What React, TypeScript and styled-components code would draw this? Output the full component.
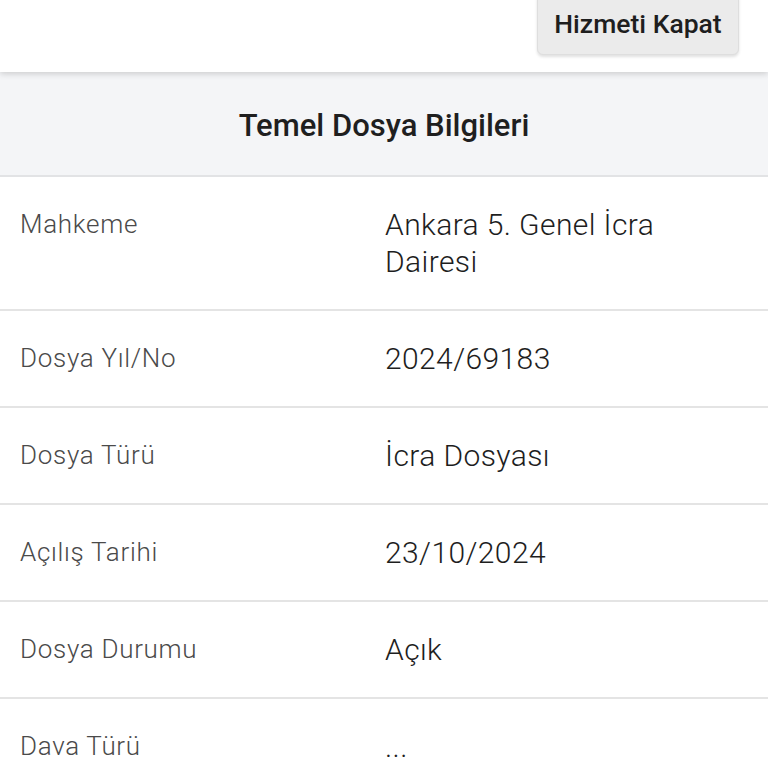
import React from 'react'
import styled, { createGlobalStyle } from 'styled-components'

const GlobalStyle = createGlobalStyle`
    html, body {
        margin: 0;
        padding: 0;
        background: #ffffff;
        font-family: Roboto, "Noto Sans", "Liberation Sans", sans-serif;
    }
    * {
        box-sizing: border-box;
    }
`

const Page = styled.div`
    display: flex;
    flex-direction: column;
    width: 100%;
    min-height: 100vh;
    overflow: hidden;
`

const TopBar = styled.div`
    position: relative;
    z-index: 1;
    display: flex;
    justify-content: flex-end;
    align-items: flex-start;
    height: 72px;
    padding-right: 29px;
    background: #ffffff;
    box-shadow: 0 2px 6px rgba(0, 0, 0, 0.16);
`

const CloseButton = styled.button`
    display: flex;
    align-items: center;
    justify-content: center;
    width: 202px;
    height: 64px;
    margin-top: -9px;
    padding: 0;
    border: 1px solid #dedede;
    border-radius: 6px;
    background: #ebebeb;
    box-shadow: 0 2px 3px rgba(0, 0, 0, 0.12);
    font-family: inherit;
    font-size: 26.5px;
    font-weight: 500;
    color: #1e1e1e;
`

const SectionHeader = styled.div`
    display: flex;
    align-items: center;
    justify-content: center;
    height: 105px;
    padding-top: 3px;
    background: #f4f5f7;
    border-bottom: 2px solid #e2e3e5;
    font-size: 31px;
    font-weight: 500;
    color: #1f1f1f;
`

const Table = styled.div`
    display: flex;
    flex-direction: column;
`

const Row = styled.div`
    display: grid;
    grid-template-columns: 365px 1fr;
    padding: 29px 40px 29px 20px;
    border-bottom: 2px solid #e4e4e4;
`

const Label = styled.div`
    font-size: 26px;
    line-height: 36px;
    font-weight: 300;
    letter-spacing: 0.7px;
    color: #4a4a4a;
`

const Value = styled.div`
    font-size: 30px;
    line-height: 37px;
    font-weight: 300;
    letter-spacing: 0.4px;
    color: #1e1e1e;
`

const rows: [string, string][] = [
    ['Mahkeme', 'Ankara 5. Genel İcra Dairesi'],
    ['Dosya Yıl/No', '2024/69183'],
    ['Dosya Türü', 'İcra Dosyası'],
    ['Açılış Tarihi', '23/10/2024'],
    ['Dosya Durumu', 'Açık'],
    ['Dava Türü', '...'],
]

export default function App() {
    return (
        <Page>
            <GlobalStyle />
            <TopBar>
                <CloseButton>Hizmeti Kapat</CloseButton>
            </TopBar>
            <SectionHeader>Temel Dosya Bilgileri</SectionHeader>
            <Table>
                {rows.map(([label, value]) => (
                    <Row key={label}>
                        <Label>{label}</Label>
                        <Value>{value}</Value>
                    </Row>
                ))}
            </Table>
        </Page>
    )
}
